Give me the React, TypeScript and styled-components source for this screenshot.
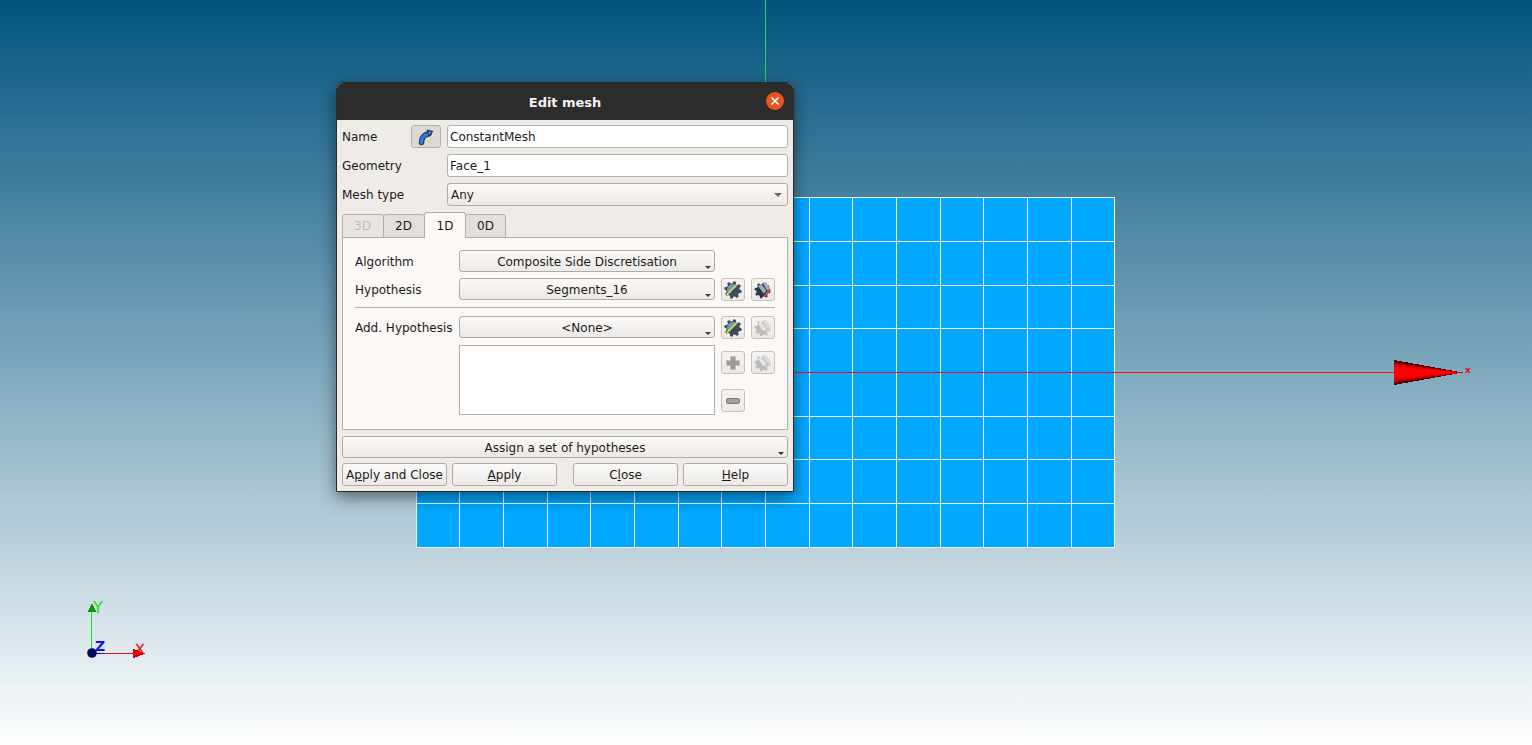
import React from "react";
import styled, { createGlobalStyle } from "styled-components";

const Global = createGlobalStyle`
  html, body { margin: 0; padding: 0; width: 100%; height: 100%; overflow: hidden; }
  #root { width: 100%; height: 100%; }
`;

const Viewport = styled.div`
  position: relative;
  width: 1532px;
  height: 745px;
  overflow: hidden;
  background: linear-gradient(180deg, #03547e 0%, #ffffff 100%);
  font-family: "DejaVu Sans", sans-serif;
  font-size: 12px;
  color: #1b1b1b;
`;

const Scene = styled.svg`
  position: absolute;
  left: 0;
  top: 0;
`;

const Dialog = styled.div`
  position: absolute;
  left: 336px;
  top: 82px;
  width: 458px;
  height: 410px;
  box-sizing: border-box;
  display: flex;
  flex-direction: column;
  background: #efebe7;
  border: 1px solid #2a2a2a;
  border-radius: 7px 7px 0 0;
  box-shadow: 0 5px 16px rgba(0, 0, 0, 0.5);
  overflow: hidden;
`;

const TitleBar = styled.div`
  position: relative;
  flex: 0 0 37px;
  box-sizing: border-box;
  padding-top: 2px;
  display: flex;
  align-items: center;
  justify-content: center;
  background: #2c2c2c;
  color: #f4f4f2;
  font-weight: 700;
  font-size: 13px;
  letter-spacing: -0.05px;
`;

const CloseDot = styled.div`
  position: absolute;
  right: 9px;
  top: 9px;
  width: 18px;
  height: 18px;
  border-radius: 50%;
  background: #e95420;
  display: flex;
  align-items: center;
  justify-content: center;
`;

const Body = styled.div`
  flex: 1;
  display: flex;
  flex-direction: column;
  padding: 5px;
`;

const FormGrid = styled.div`
  display: grid;
  grid-template-columns: 69px 36px 341px;
  grid-auto-rows: 23px;
  row-gap: 6px;
  align-items: center;
`;

const Label = styled.label`
  white-space: nowrap;
`;

const SelectBtn = styled.button`
  width: 30px;
  height: 23px;
  padding: 0;
  box-sizing: border-box;
  border: 1px solid #b3aea9;
  border-radius: 3px;
  background: #dcd8d4;
  display: flex;
  align-items: center;
  justify-content: center;
`;

const TextField = styled.div`
  grid-column: 3;
  width: 341px;
  height: 23px;
  box-sizing: border-box;
  border: 1px solid #b6b1ac;
  border-radius: 3px;
  background: #ffffff;
  padding: 0 2px;
  line-height: 23px;
`;

const Combo = styled.div`
  grid-column: 3;
  position: relative;
  width: 341px;
  height: 23px;
  box-sizing: border-box;
  border: 1px solid #b0aba6;
  border-radius: 3px;
  background: linear-gradient(180deg, #fbfaf9 0%, #ece9e6 100%);
  padding: 0 3px;
  line-height: 23px;

  &::after {
    content: "";
    position: absolute;
    right: 5px;
    top: 9px;
    border-left: 4px solid transparent;
    border-right: 4px solid transparent;
    border-top: 4px solid #6a6a6a;
  }
`;

const TabBar = styled.div`
  display: flex;
  align-items: flex-end;
  height: 26px;
  margin-top: 6px;
  margin-bottom: -1px;
  position: relative;
  z-index: 1;
`;

const Tab = styled.div<{ $active?: boolean; $disabled?: boolean; $last?: boolean }>`
  position: relative;
  z-index: ${(p) => (p.$active ? 1 : 0)};
  width: ${(p) => (p.$last ? "41px" : "42px")};
  height: ${(p) => (p.$active ? "26px" : "24px")};
  box-sizing: border-box;
  padding-right: ${(p) => (p.$active || p.$last ? "0" : "1px")};
  border: 1px solid #b3aea9;
  border-bottom: ${(p) => (p.$active ? "none" : "1px solid #b3aea9")};
  border-radius: 3px 3px 0 0;
  margin-right: -1px;
  background: ${(p) => (p.$active ? "#fbf8f5" : p.$disabled ? "#e8e5e2" : "#e3dfdb")};
  color: ${(p) => (p.$disabled ? "#c0bdba" : "#1b1b1b")};
  display: flex;
  align-items: center;
  justify-content: center;
`;

const TabPanel = styled.div`
  height: 193px;
  box-sizing: border-box;
  border: 1px solid #b3aea9;
  background: #fbf8f5;
  padding: 12px 12px 0 12px;
  display: flex;
  flex-direction: column;
`;

const ParamRow = styled.div<{ $gap?: number }>`
  display: flex;
  align-items: flex-start;
  height: 22px;
  line-height: 24px;
  margin-bottom: ${(p) => p.$gap ?? 6}px;
`;

const ParamLabel = styled.span`
  flex: 0 0 104px;
  white-space: nowrap;
`;

const MenuBtn = styled.div<{ $full?: boolean }>`
  position: relative;
  width: ${(p) => (p.$full ? "446px" : "256px")};
  height: 22px;
  flex: none;
  box-sizing: border-box;
  border: 1px solid #b0aba6;
  border-radius: 3px;
  background: linear-gradient(180deg, #fbfaf9 0%, #ece9e6 100%);
  text-align: center;
  line-height: 22px;

  &::after {
    content: "";
    position: absolute;
    right: 3px;
    bottom: 2px;
    border-left: 3px solid transparent;
    border-right: 3px solid transparent;
    border-top: 3px solid #3a3a3a;
  }
`;

const IconBtn = styled.button`
  width: 24px;
  height: 23px;
  flex: none;
  padding: 0;
  margin-left: 6px;
  box-sizing: border-box;
  border: 1px solid #c6c1bc;
  border-radius: 3px;
  background: linear-gradient(180deg, #f6f4f2 0%, #ebe8e5 100%);
  display: flex;
  align-items: center;
  justify-content: center;
`;

const Divider = styled.hr`
  width: 100%;
  height: 1px;
  border: none;
  margin: 0 0 8px 0;
  background: #b3aea9;
`;

const ListRow = styled.div`
  display: flex;
  height: 70px;
`;

const ListBox = styled.div`
  margin-left: 104px;
  width: 256px;
  height: 70px;
  flex: none;
  box-sizing: border-box;
  border: 1px solid #b3aea9;
  background: #ffffff;
`;

const ListButtons = styled.div`
  display: flex;
  flex-direction: column;
  justify-content: space-between;
  padding-top: 6px;
  padding-bottom: 3px;
`;

const ListBtnRow = styled.div`
  display: flex;
`;

const AssignRow = styled.div`
  margin-top: 6px;
  display: flex;
`;

const ActionBar = styled.div`
  display: flex;
  margin-top: 5px;
  gap: 5px;
`;

const ActionBtn = styled.button<{ $gapLeft?: boolean }>`
  width: 105px;
  height: 23px;
  padding: 0;
  box-sizing: border-box;
  border: 1px solid #b0aba6;
  border-radius: 3px;
  background: linear-gradient(180deg, #fbfaf9 0%, #ece9e6 100%);
  font-family: inherit;
  font-size: 12px;
  color: inherit;
  margin-left: ${(p) => (p.$gapLeft ? "11px" : "0")};
`;

const Mn = styled.span`
  text-decoration: underline;
`;

const IconSvg = styled.svg<{ $blur?: number }>`
  filter: blur(${(p) => p.$blur ?? 0.45}px);
`;

function gearPath(cx: number, cy: number, r1: number, r2: number, teeth: number) {
  const pts: string[] = [];
  for (let i = 0; i < teeth; i++) {
    const a = (i / teeth) * Math.PI * 2 + 0.2;
    const s = (Math.PI * 2) / teeth;
    const offs: [number, number][] = [
      [-0.32, r1],
      [-0.17, r2],
      [0.17, r2],
      [0.32, r1],
    ];
    for (const [o, r] of offs) {
      const t = a + o * s;
      pts.push(`${(cx + Math.cos(t) * r).toFixed(2)} ${(cy + Math.sin(t) * r).toFixed(2)}`);
    }
  }
  return "M" + pts.join("L") + "Z";
}

const GEAR = gearPath(9, 9, 6.8, 8.8, 8);
const GEAR_EDIT = gearPath(8.5, 9.5, 6.2, 8, 8);

const GearIcon = () => (
  <IconSvg width="18" height="18" viewBox="0 0 18 18">
    <path d={GEAR} fill="#3d4c5a" />
    <path d="M3 9 A6 6 0 0 1 13 4.5 L9 9 L5 13 A6 6 0 0 1 3 9 Z" fill="#7198bc" />
    <circle cx="9" cy="9" r="2" fill="#33485c" />
    <path d="M2.5 14 L13 3.5" stroke="#c2d84e" strokeWidth="1.8" />
  </IconSvg>
);

const GearEditIcon = ({ off }: { off?: boolean }) => (
  <IconSvg width="18" height="18" viewBox="0 0 18 18">
    <path d={GEAR_EDIT} fill={off ? "#bcbbb9" : "#2f3840"} />
    <path d="M4 5 L7 2.5 L12.5 10 L9.5 12.5 Z" fill={off ? "#e6e5e3" : "#94aec8"} />
    <path d="M9 2.5 L12 1 L16 7.5 L13 9.5 Z" fill={off ? "#dcdbd9" : "#a6b0ba"} />
    <path d="M10.5 13.5 L15.5 7.5 L17 9 L12 15 Z" fill={off ? "#cfcecc" : "#d6405e"} />
    <path d="M10.5 13.5 L12 15 L9.5 16 Z" fill={off ? "#b0afad" : "#3f9a5c"} />
  </IconSvg>
);

const PlusIcon = () => (
  <IconSvg width="16" height="16" viewBox="0 0 16 16" $blur={0.5}>
    <path d="M5.5 1.5 H10.5 V5.5 H14.5 V10.5 H10.5 V14.5 H5.5 V10.5 H1.5 V5.5 H5.5 Z" fill="#9d9b99" stroke="#c4c1be" strokeLinejoin="round" />
  </IconSvg>
);

const MinusIcon = () => (
  <IconSvg width="16" height="16" viewBox="0 0 16 16" $blur={0.5}>
    <rect x="1.5" y="5.5" width="13" height="5" rx="1.5" fill="#a3a19f" stroke="#7e7c7a" />
  </IconSvg>
);

const ArrowIcon = () => (
  <IconSvg width="20" height="20" viewBox="0 0 20 20" $blur={0.4}>
    <path d="M5.5 15.5 C5.5 10 8 8 13 6.5" fill="none" stroke="#27395a" strokeWidth="5.6" strokeLinecap="round" />
    <path d="M5.5 15.5 C5.5 10 8 8 13 6.5" fill="none" stroke="#2f7ad6" strokeWidth="3.6" strokeLinecap="round" />
    <path d="M10.5 2.5 L17.5 4 L13 10 Z" fill="#27395a" />
    <path d="M12.5 4.5 L15.5 5 L13.5 7.5 Z" fill="#6aa8e8" />
  </IconSvg>
);

const xs = [416, 459, 503, 547, 590, 634, 678, 721, 765, 809, 852, 896, 940, 983, 1027, 1071, 1114];
const ys = [197, 241, 285, 328, 372, 416, 459, 503, 547];

const CONE_BANDS: [string, number][] = [
  ["#4a0000", 12.5],
  ["#a00000", 10.5],
  ["#d80000", 8.5],
  ["#ff0000", 6],
];

const MeshScene = () => (
  <Scene width="1532" height="745" viewBox="0 0 1532 745">
    <line x1="765.5" y1="0" x2="765.5" y2="197" stroke="#18e050" />
    <rect x="416" y="197" width="699" height="351" fill="#00a8ff" />
    <g stroke="#f4f9fc" shapeRendering="crispEdges">
      {xs.map((x) => (
        <line key={x} x1={x + 0.5} y1="197" x2={x + 0.5} y2="548" />
      ))}
      {ys.map((y) => (
        <line key={y} x1="416" y1={y + 0.5} x2="1115" y2={y + 0.5} />
      ))}
    </g>
    <line x1="793" y1="372.5" x2="1396" y2="372.5" stroke="#f01010" />
    <g shapeRendering="crispEdges">
      {CONE_BANDS.map(([c, h]) => (
        <polygon key={c} points={`1394,${372.5 - h} 1463,372.5 1394,${372.5 + h}`} fill={c} />
      ))}
    </g>
    <text x="1465" y="373" fontSize="9" fontWeight="700" fill="#e01010" fontFamily="DejaVu Sans, sans-serif">x</text>

    <line x1="91.5" y1="653" x2="91.5" y2="610" stroke="#19e019" />
    <g shapeRendering="crispEdges">
      <polygon points="92,603 96.5,612 87.5,612" fill="#0a9a0a" />
      <polygon points="145,653.5 133,648.5 133,658.5" fill="#c00000" />
      <polygon points="145,653.5 133,651 133,656" fill="#ee0000" />
    </g>
    <line x1="92" y1="653.5" x2="135" y2="653.5" stroke="#e01010" />
    <line x1="92" y1="653.5" x2="104" y2="653.5" stroke="#1010e0" />
    <circle cx="92" cy="653" r="4.8" fill="#0a0a5c" />
    <text x="93" y="613" fontSize="16" fill="#19e019" fontFamily="DejaVu Sans, sans-serif">Y</text>
    <text x="95" y="651" fontSize="14" fontWeight="700" fill="#1018e8" fontFamily="DejaVu Sans, sans-serif">Z</text>
    <text x="135" y="654" fontSize="14" fill="#e01010" stroke="#e01010" strokeWidth="0.3" fontFamily="DejaVu Sans, sans-serif">X</text>
  </Scene>
);

export default function App() {
  return (
    <Viewport>
      <Global />
      <MeshScene />
      <Dialog>
        <TitleBar>
          Edit mesh
          <CloseDot>
            <svg width="10" height="10" viewBox="0 0 10 10">
              <path d="M1.5 1.5 L8.5 8.5 M8.5 1.5 L1.5 8.5" stroke="#fff" strokeWidth="1.5" />
            </svg>
          </CloseDot>
        </TitleBar>
        <Body>
          <FormGrid>
            <Label>Name</Label>
            <SelectBtn>
              <ArrowIcon />
            </SelectBtn>
            <TextField>ConstantMesh</TextField>
            <Label>Geometry</Label>
            <span />
            <TextField>Face_1</TextField>
            <Label>Mesh type</Label>
            <span />
            <Combo>Any</Combo>
          </FormGrid>
          <TabBar>
            <Tab $disabled>3D</Tab>
            <Tab>2D</Tab>
            <Tab $active>1D</Tab>
            <Tab $last>0D</Tab>
          </TabBar>
          <TabPanel>
            <ParamRow>
              <ParamLabel>Algorithm</ParamLabel>
              <MenuBtn>Composite Side Discretisation</MenuBtn>
            </ParamRow>
            <ParamRow $gap={7}>
              <ParamLabel>Hypothesis</ParamLabel>
              <MenuBtn>Segments_16</MenuBtn>
              <IconBtn><GearIcon /></IconBtn>
              <IconBtn><GearEditIcon /></IconBtn>
            </ParamRow>
            <Divider />
            <ParamRow $gap={7}>
              <ParamLabel>Add. Hypothesis</ParamLabel>
              <MenuBtn>&lt;None&gt;</MenuBtn>
              <IconBtn><GearIcon /></IconBtn>
              <IconBtn><GearEditIcon off /></IconBtn>
            </ParamRow>
            <ListRow>
              <ListBox />
              <ListButtons>
                <ListBtnRow>
                  <IconBtn><PlusIcon /></IconBtn>
                  <IconBtn><GearEditIcon off /></IconBtn>
                </ListBtnRow>
                <ListBtnRow>
                  <IconBtn><MinusIcon /></IconBtn>
                </ListBtnRow>
              </ListButtons>
            </ListRow>
          </TabPanel>
          <AssignRow>
            <MenuBtn $full>Assign a set of hypotheses</MenuBtn>
          </AssignRow>
          <ActionBar>
            <ActionBtn>A<Mn>p</Mn>ply and Close</ActionBtn>
            <ActionBtn><Mn>A</Mn>pply</ActionBtn>
            <ActionBtn $gapLeft>C<Mn>l</Mn>ose</ActionBtn>
            <ActionBtn><Mn>H</Mn>elp</ActionBtn>
          </ActionBar>
        </Body>
      </Dialog>
    </Viewport>
  );
}
